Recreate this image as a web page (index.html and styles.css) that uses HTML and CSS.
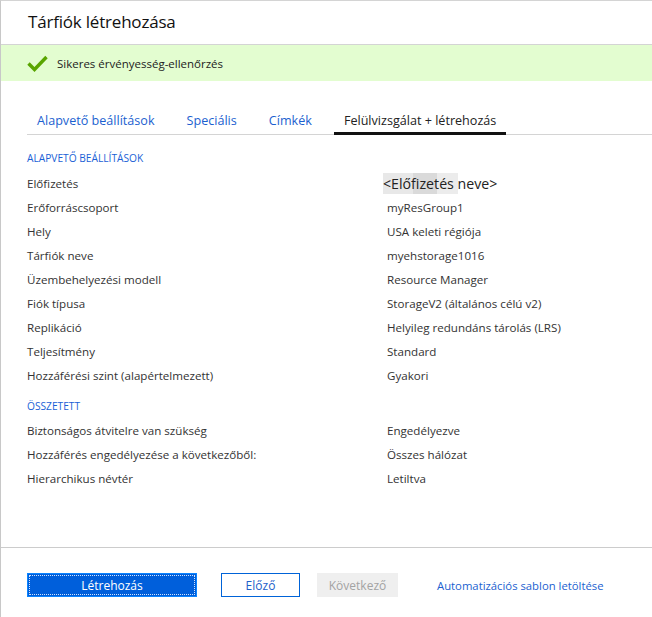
FILE: index.html
```html
<!DOCTYPE html>
<html lang="hu">
<head>
<meta charset="utf-8">
<title>Tárfiók létrehozása</title>
<link rel="stylesheet" href="styles.css">
</head>
<body>
<div class="blade">
  <header class="blade-header">
    <h1 class="title">Tárfiók létrehozása</h1>
  </header>
  <div class="banner">
    <svg class="check" width="21" height="17" viewBox="0 0 21 17"><path d="M1.5 8.5 L7.5 14.5 L19.5 2" fill="none" stroke="#59a500" stroke-width="3.4"/></svg>
    <span class="banner-text">Sikeres érvényesség-ellenőrzés</span>
  </div>
  <div class="content">
    <nav class="tabs">
      <span class="tab">Alapvető beállítások</span>
      <span class="tab">Speciális</span>
      <span class="tab">Címkék</span>
      <span class="tab active">Felülvizsgálat + létrehozás</span>
    </nav>
    <div class="section-title">ALAPVETŐ BEÁLLÍTÁSOK</div>
    <div class="rows">
      <div class="row"><span class="label">Előfizetés</span><span class="value sub"><span class="hl">&lt;Előfizetés </span>neve&gt;</span></div>
      <div class="row"><span class="label">Erőforráscsoport</span><span class="value">myResGroup1</span></div>
      <div class="row"><span class="label">Hely</span><span class="value">USA keleti régiója</span></div>
      <div class="row"><span class="label">Tárfiók neve</span><span class="value">myehstorage1016</span></div>
      <div class="row"><span class="label">Üzembehelyezési modell</span><span class="value">Resource Manager</span></div>
      <div class="row"><span class="label">Fiók típusa</span><span class="value">StorageV2 (általános célú v2)</span></div>
      <div class="row"><span class="label">Replikáció</span><span class="value">Helyileg redundáns tárolás (LRS)</span></div>
      <div class="row"><span class="label">Teljesítmény</span><span class="value">Standard</span></div>
      <div class="row"><span class="label">Hozzáférési szint (alapértelmezett)</span><span class="value">Gyakori</span></div>
    </div>
    <div class="section-title second">ÖSSZETETT</div>
    <div class="rows second">
      <div class="row"><span class="label">Biztonságos átvitelre van szükség</span><span class="value">Engedélyezve</span></div>
      <div class="row"><span class="label">Hozzáférés engedélyezése a következőből:</span><span class="value">Összes hálózat</span></div>
      <div class="row"><span class="label">Hierarchikus névtér</span><span class="value">Letiltva</span></div>
    </div>
  </div>
  <footer class="footer">
    <button class="btn primary"><span class="focus">Létrehozás</span></button>
    <button class="btn secondary">Előző</button>
    <button class="btn disabled">Következő</button>
    <a class="link" href="#">Automatizációs sablon letöltése</a>
  </footer>
</div>
</body>
</html>
```
FILE: styles.css
```css
* { box-sizing: border-box; }
html, body { margin: 0; padding: 0; background: #fff; }
body {
  font-family: "Open Sans", "Noto Sans", sans-serif;
  color: #262626;
  width: 652px;
  height: 617px;
  overflow: hidden;
}
.blade {
  height: 617px;
  border-left: 1px solid #c8c8c8;
  border-top: 1px solid #d4d4d4;
  display: flex;
  flex-direction: column;
}
.blade-header {
  height: 44px;
  border-bottom: 1px solid #d4d4d4;
  padding-left: 27px;
  display: flex;
  align-items: center;
}
.title {
  margin: 0;
  font-size: 17px;
  font-weight: 400;
  color: #111;
  letter-spacing: -0.2px;
  margin-top: -3px;
}
.banner {
  height: 36px;
  background: #e3fdd0;
  display: flex;
  align-items: center;
  padding-left: 26px;
}
.check { margin-right: 9px; margin-top: 0; }
.banner-text { font-size: 11.5px; color: #222; }
.content {
  flex: 1;
  padding-left: 26px;
}
.tabs {
  margin-top: 29px;
  border-bottom: 1px solid #d4d4d4;
  display: flex;
  height: 25px;
  align-items: flex-start;
}
.tab {
  font-size: 12.6px;
  color: #1b5fd0;
  padding: 2px 10px 0;
  margin-right: 12px;
  height: 24px;
  line-height: 18px;
}
.tab.active {
  color: #222;
  border-bottom: 3px solid #111;
  height: 25px;
}
.section-title {
  font-size: 10.2px;
  color: #1a5fd6;
  margin-top: 15px;
  height: 16px;
  line-height: 16px;
}
.section-title.second { margin-top: 11px; }
.rows { padding-top: 5px; }
.rows.second { padding-top: 4px; }
.row {
  display: flex;
  height: 24px;
  align-items: center;
  font-size: 11.6px;
  color: #333;
}
.label { width: 360px; flex: none; }
.value { white-space: nowrap; }
.value.sub { font-size: 14.2px; color: #222; margin-left: -4px; }
.hl {
  background: linear-gradient(to right, #e8e8e8 0, #e8e8e8 40%, #dadada 40%, #dadada 72%, #ececec 72%, #ececec 100%);
  padding: 1px 0;
}
.footer {
  height: 70px;
  border-top: 1px solid #cccccc;
  display: flex;
  align-items: center;
  padding-left: 26px;
  padding-top: 5px;
}
.btn {
  font-family: inherit;
  font-size: 12px;
  height: 24px;
  padding: 0;
  cursor: pointer;
}
.btn.primary {
  width: 170px;
  background: #005fdb;
  border: 1px solid #0a84ff;
  color: #fff;
  padding: 1px;
}
.focus {
  display: block;
  height: 100%;
  border: 1px dotted #cfe4ff;
  line-height: 19px;
}
.btn.secondary {
  width: 79px;
  margin-left: 24px;
  background: #fff;
  border: 1px solid #0063d8;
  color: #1d5fc9;
}
.btn.disabled {
  width: 81px;
  margin-left: 17px;
  background: #efefef;
  border: 1px solid #efefef;
  color: #a3a3a3;
}
.link {
  margin-left: 39px;
  font-size: 11.3px;
  color: #1b5fd0;
  text-decoration: none;
}
```
